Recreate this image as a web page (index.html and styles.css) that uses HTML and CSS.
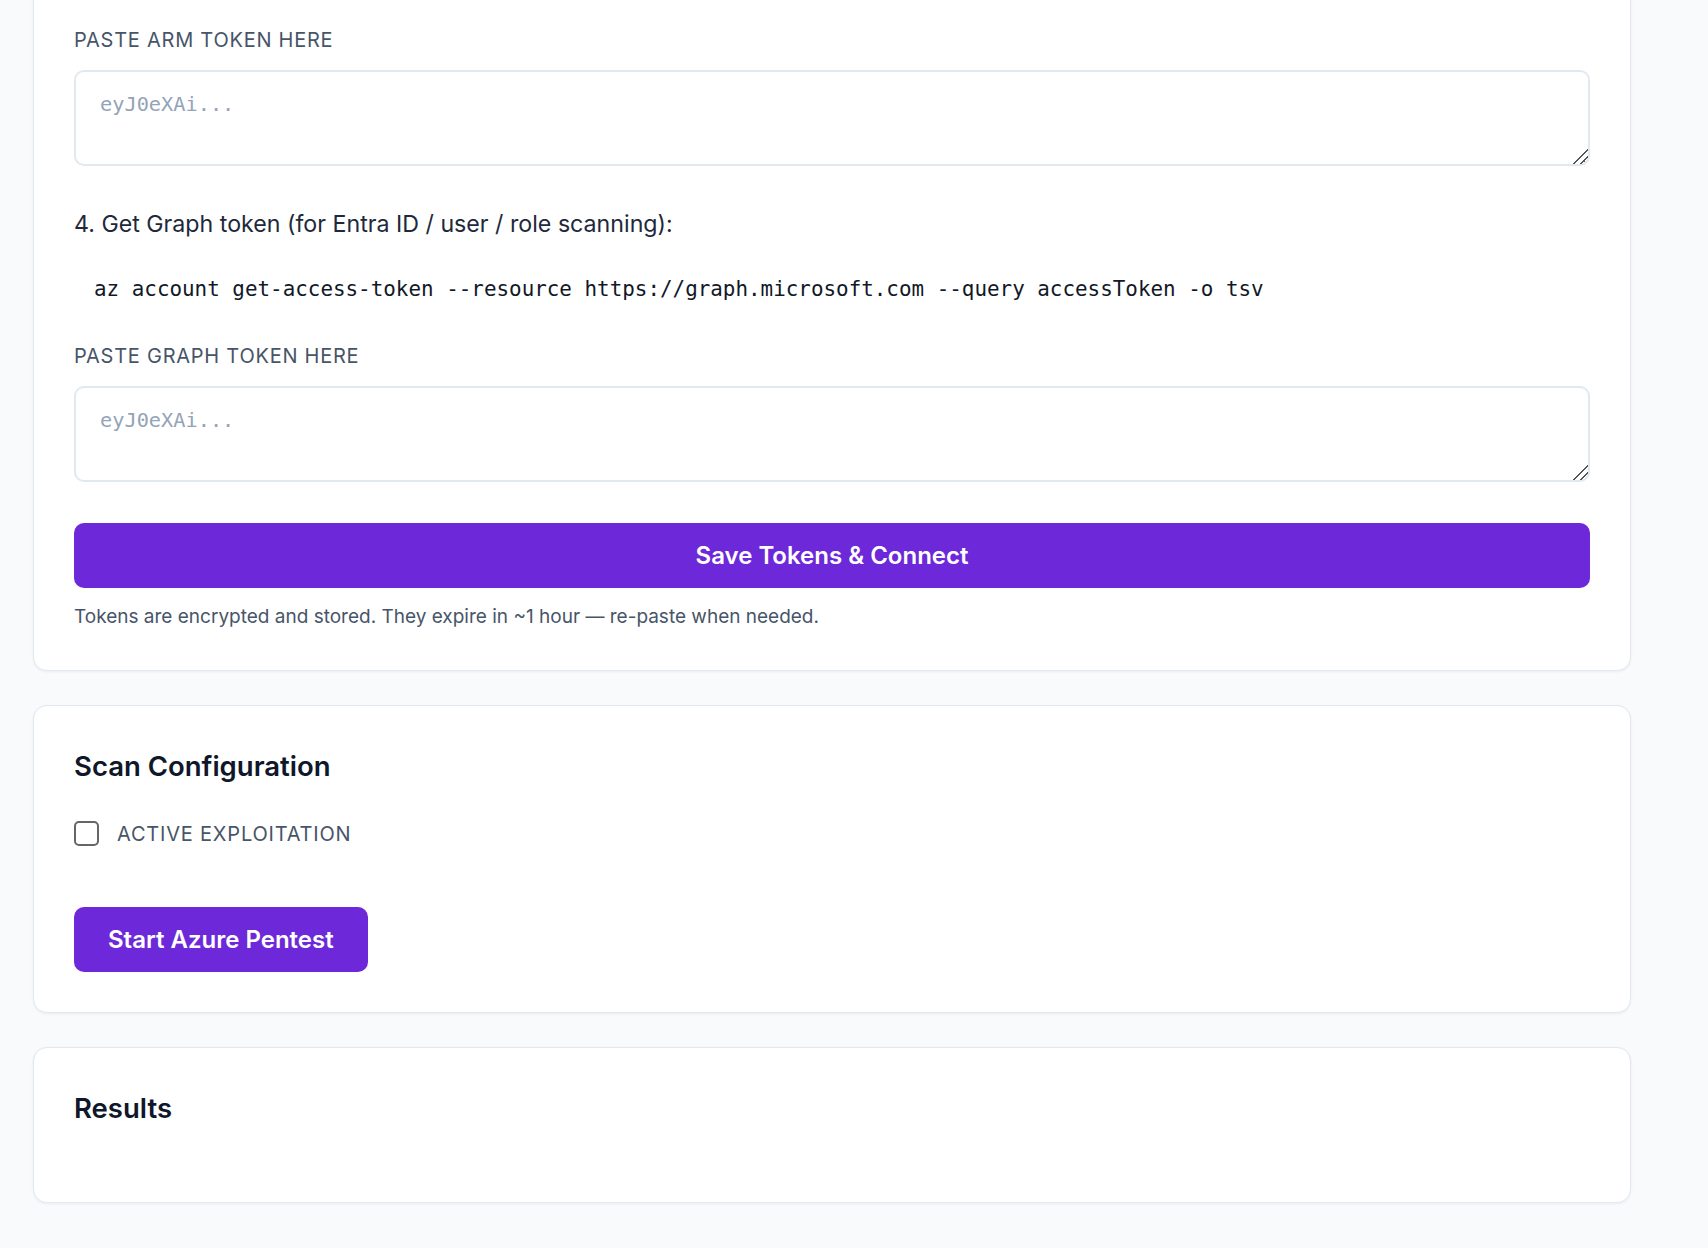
FILE: index.html
```html
<!DOCTYPE html>
<html lang="en">
<head>
    <meta charset="UTF-8">
    <meta name="viewport" content="width=device-width, initial-scale=1.0">
    <title>Azure Pentest</title>
    <link rel="stylesheet" href="styles.css">
</head>
<body>

<main class="page">
    <section class="card card-auth">
        <label class="field-label" for="armToken">Paste ARM token here</label>
        <textarea id="armToken" class="token-input" placeholder="eyJ0eXAi..."></textarea>

        <p class="step">4. Get Graph token (for Entra ID / user / role scanning):</p>
        <pre class="cmd">az account get-access-token --resource https://graph.microsoft.com --query accessToken -o tsv</pre>

        <label class="field-label" for="graphToken">Paste Graph token here</label>
        <textarea id="graphToken" class="token-input" placeholder="eyJ0eXAi..."></textarea>

        <button id="saveTokens" class="btn btn-block">Save Tokens &amp; Connect</button>
        <p class="hint">Tokens are encrypted and stored. They expire in ~1 hour — re-paste when needed.</p>
    </section>

    <section class="card">
        <h2>Scan Configuration</h2>
        <label class="check">
            <input type="checkbox" id="activeExploit">
            <span>Active Exploitation</span>
        </label>
        <button id="startScan" class="btn">Start Azure Pentest</button>
    </section>

    <section class="card">
        <h2>Results</h2>
        <div id="results"></div>
    </section>
</main>

</body>
</html>
```

FILE: styles.css
```css
body {
    margin: 0;
    font-family: Inter, "Liberation Sans", sans-serif;
    background-color: #f8fafc;
    color: #0f172a;
}

.page {
    max-width: 1598px;
    padding: 0 0 48px 33px;
}

.card {
    display: flex;
    flex-direction: column;
    align-items: flex-start;
    background-color: #fff;
    border: 1px solid #e2e8f0;
    border-radius: 14px;
    box-shadow: 0 1px 3px rgba(15, 23, 42, 0.06);
    padding: 40px;
    margin-bottom: 34px;
}

.card-auth {
    margin-top: -15px;
}

.field-label {
    font-size: 20px;
    line-height: 28px;
    letter-spacing: 0.75px;
    text-transform: uppercase;
    color: #475569;
    margin-bottom: 16px;
}

.token-input {
    box-sizing: border-box;
    width: 100%;
    height: 96px;
    padding: 17px 24px;
    border: 2px solid #e2e8f0;
    border-radius: 10px;
    font-family: "DejaVu Sans Mono", monospace;
    font-size: 20.3px;
    line-height: 1.5;
    color: #0f172a;
    outline: none;
}

.token-input::placeholder {
    color: #94a3b8;
}

.token-input::-webkit-resizer {
    background: linear-gradient(135deg, transparent 48%, #555 48%, #555 56%, transparent 56%, transparent 72%, #555 72%, #555 80%, transparent 80%);
}

.step {
    margin: 42px 0 0;
    font-size: 23.2px;
    line-height: 32px;
    color: #1e293b;
}

.cmd {
    margin: 33px 0 37px;
    padding: 0 20px;
    font-family: "DejaVu Sans Mono", monospace;
    font-size: 20.9px;
    line-height: 32px;
    color: #111827;
}

.btn {
    font-family: inherit;
    font-size: 24px;
    font-weight: 600;
    line-height: 33px;
    padding: 16px 34px;
    color: #fff;
    background-color: #6d28d9;
    border: none;
    border-radius: 10px;
    cursor: pointer;
}

.btn-block {
    width: 100%;
    margin-top: 41px;
}

.hint {
    margin: 15px 0 0;
    font-size: 19px;
    line-height: 27px;
    color: #475569;
}

h2 {
    margin: 0 0 32px;
    font-size: 27.5px;
    line-height: 41px;
    font-weight: 600;
    color: #0f172a;
}

.check {
    display: flex;
    align-items: center;
    gap: 18px;
    font-size: 20px;
    letter-spacing: 0.8px;
    text-transform: uppercase;
    color: #475569;
    margin-bottom: 61px;
    padding-top: 2px;
}

.check input {
    appearance: none;
    width: 25px;
    height: 25px;
    margin: 0;
    border: 2px solid #666;
    border-radius: 5px;
    background-color: #fff;
}

#results {
    min-height: 1px;
}
```
